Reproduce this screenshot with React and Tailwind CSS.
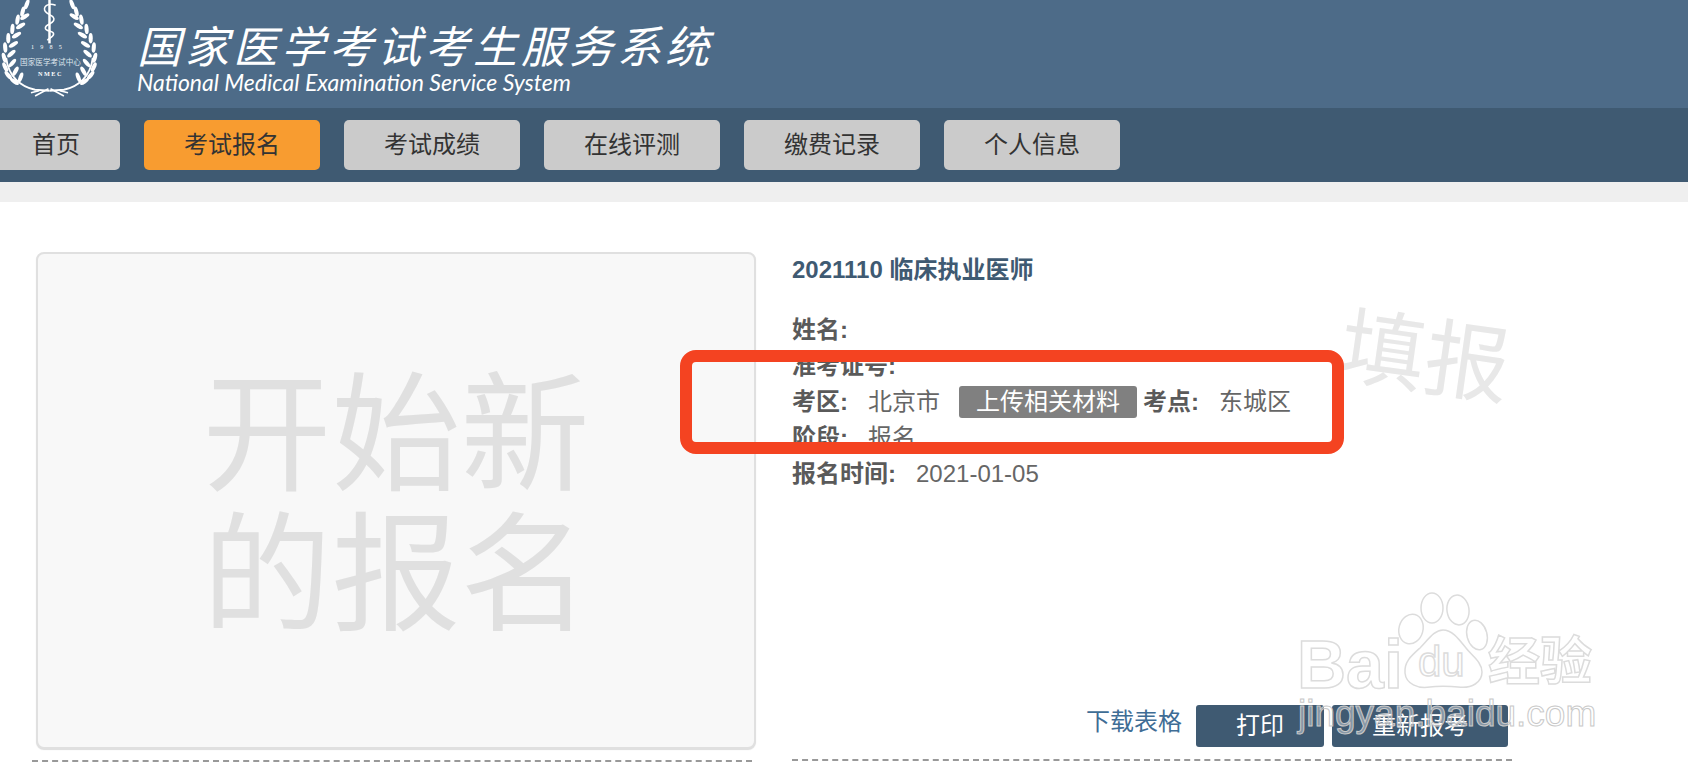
const FONT = "font-['Liberation_Sans','Noto_Sans_CJK_SC',sans-serif]";

const NAV_ITEMS = [
  { label: "首页", width: "w-[128px]" },
  { label: "考试报名", width: "w-[176px]", active: true },
  { label: "考试成绩", width: "w-[176px]" },
  { label: "在线评测", width: "w-[176px]" },
  { label: "缴费记录", width: "w-[176px]" },
  { label: "个人信息", width: "w-[176px]" },
];

// leaf centres and angle for the left branch, mirrored for the right one
const LEAVES = [
  [26, 8, 20], [22, 15, 15], [24, 20, 60], [17, 23, 10], [20, 29, 60], [12, 32, 5],
  [16, 38, 60], [8, 41, 0], [13, 47, 60], [5, 50, -5], [11, 56, 50], [4, 60, -15],
  [12, 65, 40], [5, 69, -25], [15, 73, 30], [8, 77, -40], [20, 79, 20], [14, 83, -55],
];

function Logo() {
  return (
    <svg width="100" height="103" viewBox="0 0 97 100" className="shrink-0 -mt-1">
      {[0, 1].map((side) => (
        <g key={side} transform={side ? "translate(96 0) scale(-1 1)" : undefined} fill="#fff">
          {LEAVES.map(([x, y, a], i) => (
            <ellipse key={i} cx={x} cy={y} rx="2" ry="5" transform={`rotate(${a} ${x} ${y})`} />
          ))}
          <path d="M6 60 C8 78 20 88 34 91 L48 92" fill="none" stroke="#fff" strokeWidth="1.8" />
          <path d="M47 90 L34 97 M38 92 L30 94" stroke="#fff" strokeWidth="1.6" />
        </g>
      ))}
      <path d="M48 0 V46" stroke="#fff" strokeWidth="2.4" />
      <path d="M54 9 C46 6 41 11 44 15 C47 19 54 19 52 24 C50 28 44 27 44 31 C44 35 52 33 52 37 C52 40 47 41 46 43" fill="none" stroke="#fff" strokeWidth="1.5" />
      <text x="48" y="51" textAnchor="middle" fill="#fff" fontSize="6" letterSpacing="6" fontFamily="Liberation Serif">1985</text>
      <text x="49" y="67" textAnchor="middle" fill="#dfe6ed" fontSize="7.4" fontFamily="Noto Sans CJK SC">国家医学考试中心</text>
      <text x="49" y="78" textAnchor="middle" fill="#fff" fontSize="6" letterSpacing="1.5" fontWeight="700" fontFamily="Liberation Serif">NMEC</text>
    </svg>
  );
}

function Field({ label, value, children }) {
  return (
    <div className="flex h-[36px] items-center whitespace-nowrap leading-[36px]">
      <span className="font-bold text-[#5a5a5a]">{label}:</span>
      <span className="ml-[20px] text-[#666]">{value}</span>
      {children}
    </div>
  );
}

function BaiduMark() {
  const stroke = "[-webkit-text-stroke:1.5px_#dcdcdc]";
  return (
    <div className="absolute left-[1296px] top-[590px] h-[150px] w-[310px] pointer-events-none">
      <svg width="100" height="100" viewBox="0 0 100 100" className="absolute left-[100px] top-0" fill="rgba(255,255,255,0.6)" stroke="#dcdcdc" strokeWidth="1.5">
        <ellipse cx="15" cy="39" rx="12" ry="15" transform="rotate(15 15 39)" />
        <ellipse cx="36" cy="18" rx="11" ry="15" />
        <ellipse cx="62" cy="20" rx="11" ry="15" transform="rotate(-8 62 20)" />
        <ellipse cx="81" cy="45" rx="10" ry="15" transform="rotate(-15 81 45)" />
        <path d="M47 40 C38 40 32 50 24 58 C15 66 8 72 9 83 C10 94 22 99 34 97 C40 96 54 96 62 97 C76 99 86 92 86 82 C86 72 76 66 70 58 C62 48 56 40 47 40 Z" />
      </svg>
      <span className={`absolute left-[1px] top-[39px] text-[68px] leading-[70px] font-bold text-white/60 ${stroke}`}>Bai</span>
      <span className={`absolute left-[122px] top-[50px] text-[42px] leading-[44px] text-white/60 ${stroke}`}>du</span>
      <span className={`absolute left-[192px] top-[42px] text-[52px] leading-[60px] font-bold text-white/60 whitespace-nowrap ${stroke}`}>经验</span>
      <span className="absolute left-[2px] top-[102px] text-[37px] leading-[44px] whitespace-nowrap text-white/40 [-webkit-text-stroke:1px_#c8c8c8]">jingyan.baidu.com</span>
    </div>
  );
}

export default function App() {
  return (
    <div className={`${FONT} relative h-[772px] w-full overflow-hidden bg-white`}>
      <header className="flex h-[108px] items-start overflow-hidden bg-[#4d6b88]">
        <Logo />
        <div className="ml-[37px] pt-[16px] italic text-white">
          <div className="whitespace-nowrap text-[44px] leading-[56px] tracking-[4px] font-['Noto_Sans_CJK_SC',sans-serif]">国家医学考试考生服务系统</div>
          <div className="whitespace-nowrap text-[23px] leading-[24px] -mt-[2px] font-['Lato',sans-serif]">National Medical Examination Service System</div>
        </div>
      </header>

      <nav className="flex h-[74px] items-start gap-[24px] overflow-hidden bg-[#3f5a72] pt-[12px] -ml-[8px]">
        {NAV_ITEMS.map((item) => (
          <div
            key={item.label}
            className={`flex h-[50px] shrink-0 items-center justify-center rounded-[5px] text-[24px] text-[#333] ${item.width} ${
              item.active ? "bg-[#f89c30]" : "bg-[#cbcbcb]"
            }`}
          >
            {item.label}
          </div>
        ))}
      </nav>
      <div className="h-[20px] bg-[#efefef]" />

      <main className="flex items-start pt-[50px]">
        <section className="ml-[32px] w-[724px]">
          <div className="ml-[4px] flex h-[497px] w-[720px] items-center justify-center rounded-[8px] border-2 border-[#e0e0e0] bg-[#f8f8f8] pt-[10px] shadow-[0_1px_1px_#ddd]">
            <div className="w-[387px] text-center text-[129px] leading-[140px] text-[#e0e0e0] whitespace-nowrap">
              开始新
              <br />
              的报名
            </div>
          </div>
          <div className="mt-[11px] w-[720px] border-t-2 border-dashed border-[#999]" />
        </section>

        <section className="ml-[36px] flex h-[509px] w-[720px] flex-col text-[24px]">
          <h2 className="text-[24px] font-bold leading-[36px] text-[#3f5a72]">2021110 临床执业医师</h2>
          <div className="mt-[24px] flex flex-col">
            <Field label="姓名" value="" />
            <Field label="准考证号" value="" />
            <Field label="考区" value="北京市">
              <span className="ml-[19px] flex h-[32px] w-[178px] items-center justify-center rounded-[3px] bg-[#808080] text-white">上传相关材料</span>
              <span className="ml-[6px] font-bold text-[#5a5a5a]">考点:</span>
              <span className="ml-[20px] text-[#666]">东城区</span>
            </Field>
            <Field label="阶段" value="报名" />
            <Field label="报名时间" value="2021-01-05" />
          </div>
          <div className="mt-auto flex items-center justify-end">
            <span className="mt-[-8px] text-[#3f6d95]">下载表格</span>
            <span className="ml-[14px] flex h-[42px] w-[128px] items-center justify-center rounded-[3px] bg-[#3f5a72] text-white">打印</span>
            <span className="ml-[8px] flex h-[42px] w-[176px] items-center justify-center rounded-[3px] bg-[#3f5a72] text-white">重新报考</span>
            <span className="w-[4px]" />
          </div>
          <div className="mt-[12px] border-t-2 border-dashed border-[#999]" />
        </section>
      </main>

      {/* annotation and watermarks sit over the page */}
      <div className="absolute left-[1340px] top-[312px] rotate-[8deg] whitespace-nowrap text-[85px] leading-[92px] text-[#e8e8e8]">填报</div>
      <div className="absolute left-[680px] top-[350px] h-[104px] w-[664px] rounded-[16px] border-[12px] border-[#f44321]" />
      <BaiduMark />
    </div>
  );
}
